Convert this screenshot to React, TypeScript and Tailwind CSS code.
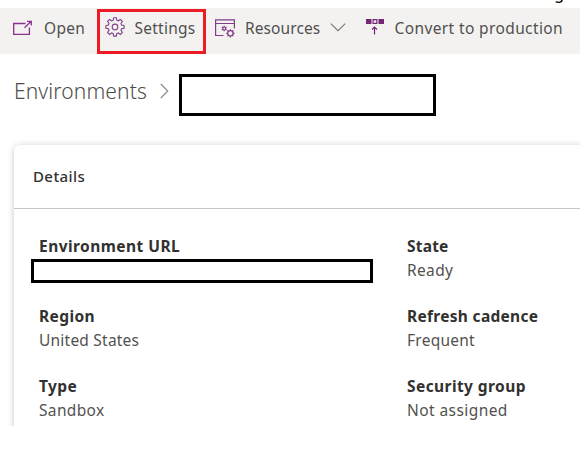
import type { ReactNode } from "react";

function OpenIcon() {
  return (
    <svg width="20" height="16" viewBox="0 0 20 16" fill="none" stroke="#8a2f90" strokeWidth="1.3">
      <path d="M12.5 3.5H.7v10.8h15.7V7.5M11.5 7.7l6.7-6.4M14 1.3h4.3v4.1" />
    </svg>
  );
}

function GearIcon() {
  return (
    <svg width="20" height="20" viewBox="0 0 20 20" fill="none" stroke="#80458a" strokeWidth="1.15">
      <path d="M8.7.7h2.6l.5 2.5 1.5.6 2.1-1.4 2 2-1.4 2.1.6 1.5 2.5.6v2.6l-2.5.6-.6 1.5 1.4 2.1-2 2-2.1-1.4-1.5.6-.5 2.5H8.7l-.5-2.500-1.500-.6-2.100 1.400-2-2L4 13.300l-.6-1.500-2.500-.6V8.600L3.400 8 4 6.500 2.600 4.400l2-2 2.100 1.400 1.500-.6z" />
      <circle cx="10" cy="9.9" r="2.8" />
    </svg>
  );
}

function ResourcesIcon() {
  return (
    <svg width="20" height="19" viewBox="0 0 20 19" fill="none" stroke="#803b89" strokeWidth="1.2">
      <path d="M8.500 16.500H.6V.8h18.800v8.700M.6 4.500h18.800" />
      <circle cx="9.2" cy="9.5" r="1.5" />
      <path d="M9.2 6.8V8m0 3v1.200M6.800 8.100l1.100.7m2.600 1.400 1.100.7M6.800 10.900l1.100-.7m2.600-1.400 1.100-.7" />
      <circle cx="15.400" cy="14.300" r="2.700" />
      <path d="M15.400 10.200v1.600m0 5v1.600m-4.100-4.100h1.600m5 0h1.600m-7-2.900 1.100 1.100m3.600 3.600 1.100 1.100m0-5.800-1.100 1.100m-3.600 3.600-1.100 1.100" />
    </svg>
  );
}

function ConvertIcon() {
  return (
    <svg width="18" height="16" viewBox="0 0 18 16" fill="none" stroke="#742774" strokeWidth="1.2">
      <path d="M0 0h5.500v5H0zM12.500 0H18v5h-5.500z" fill="#742774" stroke="none" />
      <path d="M7.100.6h3.800v3.800H7.100zM8.500 15.500V8M6 10.500 8.500 8l2.500 2.500" />
    </svg>
  );
}

function Label({ className, children }: { className: string; children: ReactNode }) {
  return <span className={`block whitespace-nowrap ${className}`}>{children}</span>;
}

function Field({ name, value, nameStyle, valueStyle }: { name: string; value?: string; nameStyle: string; valueStyle?: string }) {
  return (
    <div className="h-[70px]">
      <Label className={`h-[23px] text-[15.5px] leading-[23px] font-bold text-[#323130] ${nameStyle}`}>{name}</Label>
      {value ? (
        <Label className={`h-[23px] text-[15.5px] leading-[25px] text-[#53514f] ${valueStyle}`}>{value}</Label>
      ) : (
        <div className="-ml-2 mt-px h-6 w-[342px] border-[3.5px] border-black bg-white" />
      )}
    </div>
  );
}

export default function App() {
  return (
    <div className="h-[451px] w-[586px] overflow-hidden bg-white font-['Noto_Sans',sans-serif]">
      <div className="flex h-2 items-end justify-end overflow-hidden pr-[22px]">
        <span className="mb-1 h-[22px] text-base leading-[22px] text-black">g</span>
      </div>

      <div className="flex h-[46px] w-[580px] bg-[#f3f2f1] text-[15.5px] leading-[40px] text-[#51504f]">
        <div className="flex w-[97px] pl-[13px]">
          <div className="w-[31px] pt-3"><OpenIcon /></div>
          <Label className="tracking-[0.3px]">Open</Label>
        </div>
        <div className="mt-px flex h-[45px] w-[109px] border-[3.5px] border-[#ed1c24] pl-[4.5px] leading-[32px]">
          <div className="w-[30px] pt-[5px]"><GearIcon /></div>
          <Label className="tracking-[0.25px]">Settings</Label>
        </div>
        <div className="flex w-[160px] pl-[9px]">
          <div className="w-[30px] pt-[11px]"><ResourcesIcon /></div>
          <Label className="w-[85px] tracking-[0.1px]">Resources</Label>
          <svg className="mt-[15px]" width="16" height="9" viewBox="0 0 16 9" fill="none" stroke="#777" strokeWidth="1.1"><path d="m.8.7 7.200 7 7.200-7" /></svg>
        </div>
        <div className="flex">
          <div className="w-[28.5px] pt-[11px]"><ConvertIcon /></div>
          <Label className="tracking-[0.38px]">Convert to production</Label>
        </div>
      </div>

      <div className="flex h-[79px] pl-[14px] pt-5">
        <Label className="w-[146px] text-[21px] font-light leading-[35px] tracking-[0.12px] text-[#4e4c4a]">Environments</Label>
        <svg className="mt-[9px]" width="19" height="16" viewBox="0 0 19 16" fill="none" stroke="#888" strokeWidth="1.1"><path d="m.8 1 7 7-7 7" /></svg>
        <div className="h-[42px] w-[257px] border-[3.5px] border-black" />
      </div>

      <div className="h-[293px] w-[580px] overflow-hidden pl-[14px] pt-3">
        <div className="h-[300px] w-[600px] rounded-md bg-white shadow-[0_1px_7px_rgba(0,0,0,0.22)]">
          <div className="h-[64px] border-b border-[#c8c6c4] pl-[19px]">
            <Label className="text-[15px] font-medium leading-[63px] tracking-[0.4px] text-[#323130]">Details</Label>
          </div>
          <div className="grid grid-cols-[368px_1fr] pl-[25px] pt-[26px]">
            <Field name="Environment URL" nameStyle="tracking-[0.45px]" />
            <Field name="State" value="Ready" nameStyle="tracking-[0.2px]" valueStyle="tracking-[0.35px]" />
            <Field name="Region" value="United States" nameStyle="tracking-[0.4px]" valueStyle="tracking-[0.22px]" />
            <Field name="Refresh cadence" value="Frequent" nameStyle="tracking-[0.3px]" valueStyle="tracking-[0.25px]" />
            <Field name="Type" value="Sandbox" nameStyle="tracking-[0.4px]" valueStyle="tracking-[0.35px]" />
            <Field name="Security group" value="Not assigned" nameStyle="tracking-[0.42px]" valueStyle="tracking-[0.42px]" />
          </div>
        </div>
      </div>
    </div>
  );
}
